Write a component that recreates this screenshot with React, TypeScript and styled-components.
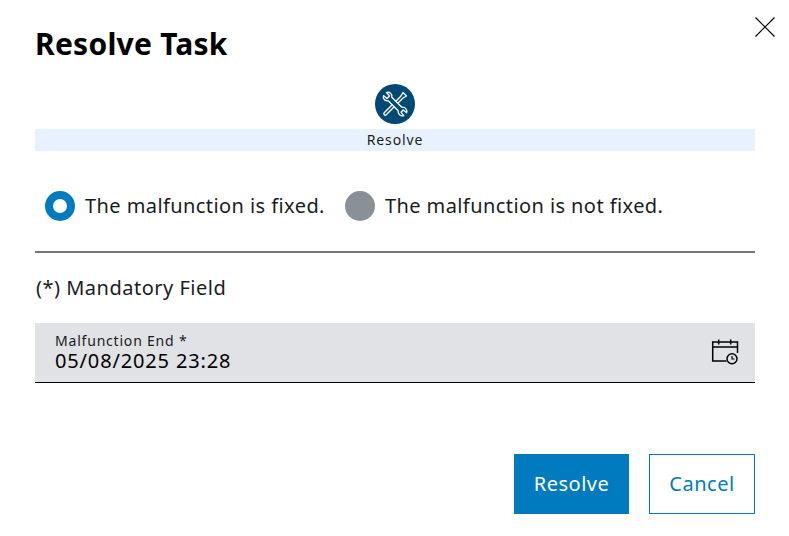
import React from 'react'
import styled, { createGlobalStyle } from 'styled-components'

const Global = createGlobalStyle`
  html, body { margin: 0; padding: 0; background: #fff; }
  body { font-family: "Noto Sans", "Liberation Sans", sans-serif; color: #000; }
`;

const Dialog = styled.div`
  box-sizing: border-box;
  position: relative;
  width: 789px;
  height: 536px;
  padding: 24px 34px 22px 35px;
  display: flex;
  flex-direction: column;
`;

const Close = styled.button`
  position: absolute;
  top: 16px;
  right: 13px;
  width: 22px;
  height: 22px;
  padding: 0;
  border: 0;
  background: none;
  display: flex;
`;

const Title = styled.h1`
  margin: 0;
  font-size: 30px;
  line-height: 40px;
  letter-spacing: 0.25px;
  font-weight: 700;
`;

const Step = styled.div`
  margin-top: 20px;
  display: flex;
  flex-direction: column;
  align-items: center;
`;

const StepIcon = styled.div`
  width: 40px;
  height: 40px;
  border-radius: 50%;
  background: #004975;
  display: flex;
  align-items: center;
  justify-content: center;
`;

const StepLabel = styled.div`
  margin-top: 5px;
  width: 100%;
  height: 22px;
  background: #e8f1ff;
  font-size: 14px;
  line-height: 22px;
  letter-spacing: 0.85px;
  text-align: center;
  color: #1a1c1d;
`;

const Options = styled.div`
  margin-top: 40px;
  padding-left: 10px;
  display: flex;
  gap: 20px;
`;

const Option = styled.label`
  display: flex;
  align-items: center;
  gap: 10px;
  font-size: 20px;
  line-height: 30px;
  letter-spacing: 0.42px;
  color: #1a1c1d;
`;

const Radio = styled.span<{ $checked?: boolean }>`
  box-sizing: border-box;
  width: 30px;
  height: 30px;
  border-radius: 50%;
  background: ${p => (p.$checked ? '#fff' : '#8a9097')};
  border: ${p => (p.$checked ? '8px solid #007bc0' : '0')};
`;

const Divider = styled.hr`
  margin: 30px 0 0;
  border: 0;
  height: 2px;
  background: #71767c;
`;

const Mandatory = styled.div`
  margin-top: 21px;
  padding-left: 1px;
  font-size: 20px;
  line-height: 28px;
  letter-spacing: 0.5px;
  color: #1a1c1d;
`;

const Field = styled.div`
  box-sizing: border-box;
  margin-top: 21px;
  height: 60px;
  padding: 8px 16px 0 20px;
  background: #e0e2e5;
  border-bottom: 1px solid #000;
  display: flex;
  align-items: flex-start;
  justify-content: space-between;
`;

const FieldText = styled.div`
  display: flex;
  flex-direction: column;
`;

const FieldLabel = styled.span`
  font-size: 14px;
  line-height: 19px;
  letter-spacing: 0.8px;
  color: #1a1c1d;
`;

const FieldValue = styled.span`
  font-size: 20px;
  line-height: 22px;
  letter-spacing: 0.85px;
  color: #000;
`;

const CalendarIcon = styled.svg`
  margin: 8px 0 0;
`;

const Actions = styled.div`
  margin-top: auto;
  display: flex;
  justify-content: flex-end;
  gap: 20px;
`;

const Button = styled.button<{ $primary?: boolean }>`
  box-sizing: border-box;
  height: 60px;
  padding: 0 0 2px;
  width: ${p => (p.$primary ? '115px' : '106px')};
  font-family: inherit;
  font-size: 20px;
  letter-spacing: 0.5px;
  border: 1px solid #007bc0;
  background: ${p => (p.$primary ? '#007bc0' : '#fff')};
  color: ${p => (p.$primary ? '#fff' : '#007bc0')};
`;

export default function App() {
  return (
    <Dialog>
      <Global />
      <Close aria-label="Close">
        <svg width="22" height="22" viewBox="0 0 22 22" fill="none" stroke="#000" strokeWidth="1.2">
          <path d="M1.5 1.5 20.5 20.5M20.5 1.5 1.5 20.5" />
        </svg>
      </Close>
      <Title>Resolve Task</Title>
      <Step>
        <StepIcon>
          <svg width="30" height="30" viewBox="0 0 30 30" fill="none" stroke="#fff" strokeWidth="1.3" strokeLinejoin="round">
            {/* wrench */}
            <path d="M3.5 6.5 7 9.5 9.5 7 6.5 3.5C9.5 2.5 12.5 5 11.8 8.2L21.8 18.2C25 17.6 27.6 20.6 26.6 23.8L23.2 21 21 23.2 23.8 26.6C20.6 27.6 17.6 25 18.2 21.8L8.2 11.8C5 12.5 2.5 9.5 3.5 6.5Z" />
            {/* screwdriver, split where it passes under the wrench */}
            <path d="M15.8 12.2 21 7 23 3.5 26.5 7 23 9 17.8 14.2" />
            <path d="M12.2 15.8 4.2 23.8C3 25 5 27.2 6.2 25.8L14.2 17.8" />
          </svg>
        </StepIcon>
        <StepLabel>Resolve</StepLabel>
      </Step>
      <Options>
        <Option><Radio $checked />The malfunction is fixed.</Option>
        <Option><Radio />The malfunction is not fixed.</Option>
      </Options>
      <Divider />
      <Mandatory>(*) Mandatory Field</Mandatory>
      <Field>
        <FieldText>
          <FieldLabel>Malfunction End *</FieldLabel>
          <FieldValue>05/08/2025 23:28</FieldValue>
        </FieldText>
        <CalendarIcon width="28" height="26" viewBox="0 0 28 26" fill="none" stroke="#000" strokeWidth="1.5">
          <path d="M26.5 14V3H1.7V22H15.5" />
          <path d="M1.7 8H26.5M7.7 .5V5.5M19.7 .5V5.5" />
          <circle cx="21" cy="19.7" r="5" />
          <path d="M21 17V20H23.5" strokeWidth="1.2" />
        </CalendarIcon>
      </Field>
      <Actions>
        <Button $primary>Resolve</Button>
        <Button>Cancel</Button>
      </Actions>
    </Dialog>
  )
}
